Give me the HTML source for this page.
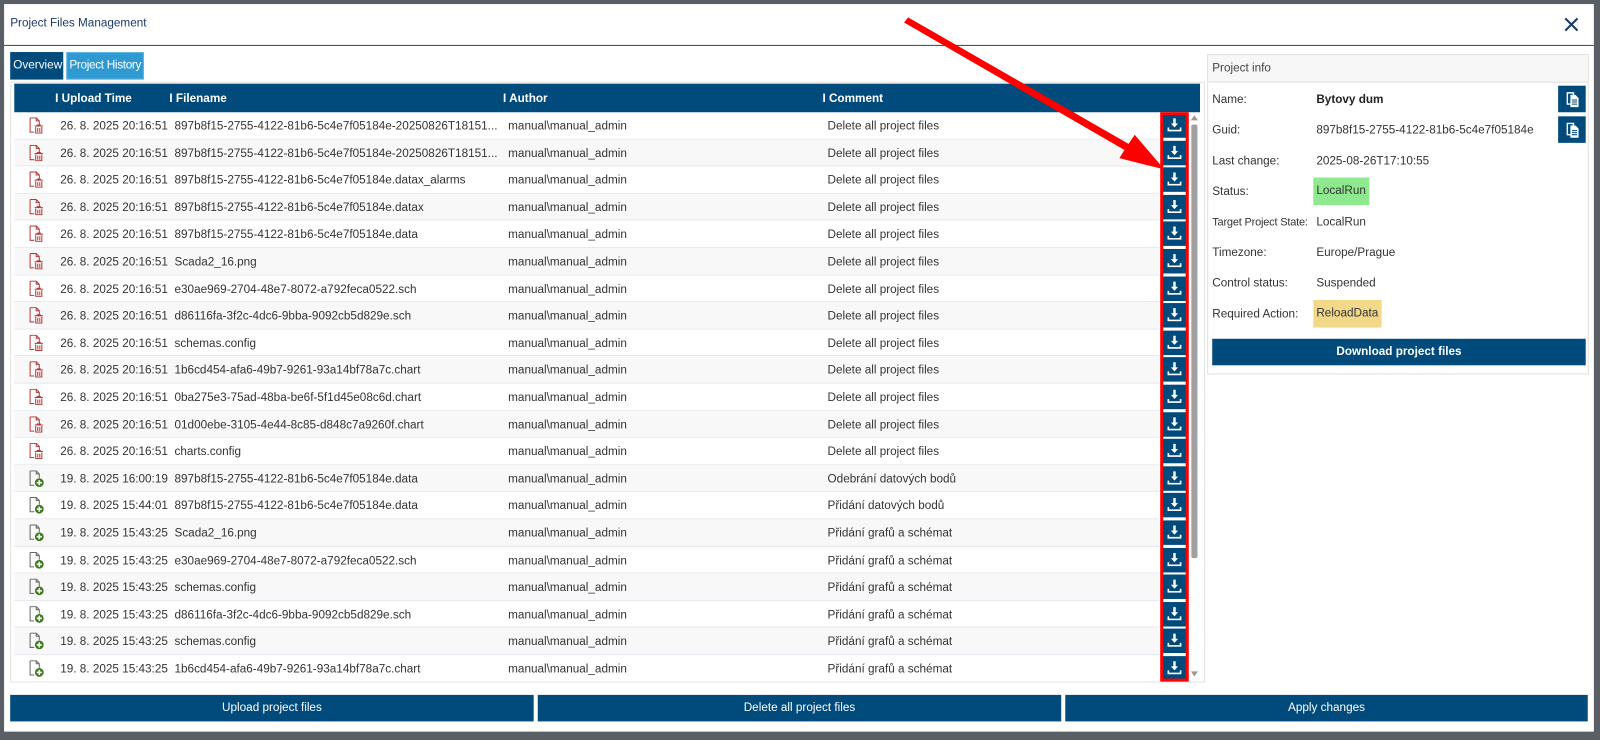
<!DOCTYPE html>
<html><head><meta charset="utf-8"><style>
*{box-sizing:border-box;margin:0;padding:0}
body{width:1600px;height:740px;background:#5a5f66;font-family:"Liberation Sans",sans-serif;font-size:11.5px;color:#333;position:relative;overflow:hidden}
.wrap{position:absolute;left:0;top:0;width:1568px;height:725px;transform:scale(1.0204);transform-origin:0 0}
.dlg{position:absolute;left:4px;top:4px;width:1558px;height:713px;background:#fff}
.abs{position:absolute}
.title{left:6px;top:13px;font-size:11.5px;color:#1d3b66}
.hline{left:0;top:40px;width:1558px;height:1px;background:#2c4a6e}
.tab{top:47px;height:27px;line-height:27px;font-size:11.5px;color:#fff;padding:0 3px;white-space:nowrap}
.tbl{left:6px;top:76px;width:1171px;height:589px;border:1px solid #e2e2e2}
.th{left:10px;top:78px;width:1162px;height:28px;background:#004a7c;color:#fff;font-weight:bold;font-size:11.5px;line-height:30px}
.th span{position:absolute}
.row{position:absolute;left:10px;width:1122px;height:26.6px;line-height:28px;border-bottom:1px solid #e6e9ef;font-size:11.5px;color:#333}
.row.a{background:#f8f8f8}
.row span{position:absolute;white-space:nowrap}
.row svg{position:absolute;left:14px;top:5px}
.dl{position:absolute;left:1135px;width:24px;height:24px;background:#004a7c}
.dl svg{position:absolute;left:5px;top:4px}
.red{left:1133px;top:106px;width:28px;height:558px;border:3px solid #f00}
.sb{left:1162px;top:106px;width:9px;height:556px}
.btn{background:#004a7c;color:#fff;text-align:center;font-size:11.5px;height:26px;line-height:27px}
.pi{left:1179px;top:49px;width:374px;height:314px;border:1px solid #e0e0e0}
.pih{left:0;top:0;width:372px;height:27px;background:#f7f7f7;border-bottom:1px solid #e0e0e0;line-height:27px;padding-left:4px;color:#444}
.lbl{left:4px;color:#333;white-space:nowrap}
.val{left:106px;color:#333;white-space:nowrap}
</style></head><body>
<svg width="0" height="0" style="position:absolute">
<defs>
<g id="del"><path d="M1.5 0.5h6l3 3v5" fill="none" stroke="#b23a3a" stroke-width="1"/><path d="M1.5 0.5v14h4" fill="none" stroke="#b23a3a"/><path d="M7.5 0.5v3h3" fill="none" stroke="#b23a3a"/><path d="M6 8.5h8M8.5 8.5v-1h3v1M7 9.5v6h6v-6M9 10.5v4M11 10.5v4" fill="none" stroke="#b23a3a"/></g>
<g id="add"><path d="M1.5 0.5h6l3 3v4" fill="none" stroke="#666"/><path d="M1.5 0.5v14h4" fill="none" stroke="#666"/><path d="M7.5 0.5v3h3" fill="none" stroke="#666"/><circle cx="10.5" cy="12" r="4.3" fill="#3d7a1f"/><path d="M8 12h5M10.5 9.5v5" stroke="#fff" stroke-width="1.6"/></g>
<g id="dn"><path d="M7 1v6" stroke="#fff" stroke-width="2.4"/><path d="M3.5 6h7l-3.5 4z" fill="#fff"/><path d="M1 10v3h12v-3" fill="none" stroke="#fff" stroke-width="1.6"/></g>
</defs></svg>
<div class="wrap">
<div class="dlg">
<div class="abs title">Project Files Management</div>
<svg class="abs" style="left:1528px;top:12px" width="16" height="16"><path d="M2 2L14 14M14 2L2 14" stroke="#1d3b66" stroke-width="2"/></svg>
<div class="abs hline"></div>
<div class="abs tab" style="left:6px;background:#004a7c;width:52px">Overview</div>
<div class="abs tab" style="left:61px;background:#2f9ad1;width:76px;border:1px solid #5bb4e3;line-height:25px;padding:0 2px;letter-spacing:-0.3px">Project History</div>
<div class="abs tbl"></div>
<div class="abs th"><span style="left:40px">I Upload Time</span><span style="left:152px">I Filename</span><span style="left:479px">I Author</span><span style="left:792px">I Comment</span></div>

<div class="row" style="top:106px"><svg width="16" height="16"><use href="#del"/></svg><span style="left:45px">26. 8. 2025 20:16:51</span><span style="left:157px">897b8f15-2755-4122-81b6-5c4e7f05184e-20250826T18151...</span><span style="left:484px">manual\manual_admin</span><span style="left:797px">Delete all project files</span></div>
<div class="row a" style="top:132.6px"><svg width="16" height="16"><use href="#del"/></svg><span style="left:45px">26. 8. 2025 20:16:51</span><span style="left:157px">897b8f15-2755-4122-81b6-5c4e7f05184e-20250826T18151...</span><span style="left:484px">manual\manual_admin</span><span style="left:797px">Delete all project files</span></div>
<div class="row" style="top:159.2px"><svg width="16" height="16"><use href="#del"/></svg><span style="left:45px">26. 8. 2025 20:16:51</span><span style="left:157px">897b8f15-2755-4122-81b6-5c4e7f05184e.datax_alarms</span><span style="left:484px">manual\manual_admin</span><span style="left:797px">Delete all project files</span></div>
<div class="row a" style="top:185.8px"><svg width="16" height="16"><use href="#del"/></svg><span style="left:45px">26. 8. 2025 20:16:51</span><span style="left:157px">897b8f15-2755-4122-81b6-5c4e7f05184e.datax</span><span style="left:484px">manual\manual_admin</span><span style="left:797px">Delete all project files</span></div>
<div class="row" style="top:212.4px"><svg width="16" height="16"><use href="#del"/></svg><span style="left:45px">26. 8. 2025 20:16:51</span><span style="left:157px">897b8f15-2755-4122-81b6-5c4e7f05184e.data</span><span style="left:484px">manual\manual_admin</span><span style="left:797px">Delete all project files</span></div>
<div class="row a" style="top:239px"><svg width="16" height="16"><use href="#del"/></svg><span style="left:45px">26. 8. 2025 20:16:51</span><span style="left:157px">Scada2_16.png</span><span style="left:484px">manual\manual_admin</span><span style="left:797px">Delete all project files</span></div>
<div class="row" style="top:265.6px"><svg width="16" height="16"><use href="#del"/></svg><span style="left:45px">26. 8. 2025 20:16:51</span><span style="left:157px">e30ae969-2704-48e7-8072-a792feca0522.sch</span><span style="left:484px">manual\manual_admin</span><span style="left:797px">Delete all project files</span></div>
<div class="row a" style="top:292.2px"><svg width="16" height="16"><use href="#del"/></svg><span style="left:45px">26. 8. 2025 20:16:51</span><span style="left:157px">d86116fa-3f2c-4dc6-9bba-9092cb5d829e.sch</span><span style="left:484px">manual\manual_admin</span><span style="left:797px">Delete all project files</span></div>
<div class="row" style="top:318.8px"><svg width="16" height="16"><use href="#del"/></svg><span style="left:45px">26. 8. 2025 20:16:51</span><span style="left:157px">schemas.config</span><span style="left:484px">manual\manual_admin</span><span style="left:797px">Delete all project files</span></div>
<div class="row a" style="top:345.4px"><svg width="16" height="16"><use href="#del"/></svg><span style="left:45px">26. 8. 2025 20:16:51</span><span style="left:157px">1b6cd454-afa6-49b7-9261-93a14bf78a7c.chart</span><span style="left:484px">manual\manual_admin</span><span style="left:797px">Delete all project files</span></div>
<div class="row" style="top:372px"><svg width="16" height="16"><use href="#del"/></svg><span style="left:45px">26. 8. 2025 20:16:51</span><span style="left:157px">0ba275e3-75ad-48ba-be6f-5f1d45e08c6d.chart</span><span style="left:484px">manual\manual_admin</span><span style="left:797px">Delete all project files</span></div>
<div class="row a" style="top:398.6px"><svg width="16" height="16"><use href="#del"/></svg><span style="left:45px">26. 8. 2025 20:16:51</span><span style="left:157px">01d00ebe-3105-4e44-8c85-d848c7a9260f.chart</span><span style="left:484px">manual\manual_admin</span><span style="left:797px">Delete all project files</span></div>
<div class="row" style="top:425.2px"><svg width="16" height="16"><use href="#del"/></svg><span style="left:45px">26. 8. 2025 20:16:51</span><span style="left:157px">charts.config</span><span style="left:484px">manual\manual_admin</span><span style="left:797px">Delete all project files</span></div>
<div class="row a" style="top:451.8px"><svg width="16" height="17"><use href="#add"/></svg><span style="left:45px">19. 8. 2025 16:00:19</span><span style="left:157px">897b8f15-2755-4122-81b6-5c4e7f05184e.data</span><span style="left:484px">manual\manual_admin</span><span style="left:797px">Odebrání datových bodů</span></div>
<div class="row" style="top:478.4px"><svg width="16" height="17"><use href="#add"/></svg><span style="left:45px">19. 8. 2025 15:44:01</span><span style="left:157px">897b8f15-2755-4122-81b6-5c4e7f05184e.data</span><span style="left:484px">manual\manual_admin</span><span style="left:797px">Přidání datových bodů</span></div>
<div class="row a" style="top:505px"><svg width="16" height="17"><use href="#add"/></svg><span style="left:45px">19. 8. 2025 15:43:25</span><span style="left:157px">Scada2_16.png</span><span style="left:484px">manual\manual_admin</span><span style="left:797px">Přidání grafů a schémat</span></div>
<div class="row" style="top:531.6px"><svg width="16" height="17"><use href="#add"/></svg><span style="left:45px">19. 8. 2025 15:43:25</span><span style="left:157px">e30ae969-2704-48e7-8072-a792feca0522.sch</span><span style="left:484px">manual\manual_admin</span><span style="left:797px">Přidání grafů a schémat</span></div>
<div class="row a" style="top:558.2px"><svg width="16" height="17"><use href="#add"/></svg><span style="left:45px">19. 8. 2025 15:43:25</span><span style="left:157px">schemas.config</span><span style="left:484px">manual\manual_admin</span><span style="left:797px">Přidání grafů a schémat</span></div>
<div class="row" style="top:584.8px"><svg width="16" height="17"><use href="#add"/></svg><span style="left:45px">19. 8. 2025 15:43:25</span><span style="left:157px">d86116fa-3f2c-4dc6-9bba-9092cb5d829e.sch</span><span style="left:484px">manual\manual_admin</span><span style="left:797px">Přidání grafů a schémat</span></div>
<div class="row a" style="top:611.4px"><svg width="16" height="17"><use href="#add"/></svg><span style="left:45px">19. 8. 2025 15:43:25</span><span style="left:157px">schemas.config</span><span style="left:484px">manual\manual_admin</span><span style="left:797px">Přidání grafů a schémat</span></div>
<div class="row" style="top:638px"><svg width="16" height="17"><use href="#add"/></svg><span style="left:45px">19. 8. 2025 15:43:25</span><span style="left:157px">1b6cd454-afa6-49b7-9261-93a14bf78a7c.chart</span><span style="left:484px">manual\manual_admin</span><span style="left:797px">Přidání grafů a schémat</span></div>

<div class="dl" style="top:107px"><svg width="14" height="14"><use href="#dn"/></svg></div>
<div class="dl" style="top:133.6px"><svg width="14" height="14"><use href="#dn"/></svg></div>
<div class="dl" style="top:160.2px"><svg width="14" height="14"><use href="#dn"/></svg></div>
<div class="dl" style="top:186.8px"><svg width="14" height="14"><use href="#dn"/></svg></div>
<div class="dl" style="top:213.4px"><svg width="14" height="14"><use href="#dn"/></svg></div>
<div class="dl" style="top:240px"><svg width="14" height="14"><use href="#dn"/></svg></div>
<div class="dl" style="top:266.6px"><svg width="14" height="14"><use href="#dn"/></svg></div>
<div class="dl" style="top:293.2px"><svg width="14" height="14"><use href="#dn"/></svg></div>
<div class="dl" style="top:319.8px"><svg width="14" height="14"><use href="#dn"/></svg></div>
<div class="dl" style="top:346.4px"><svg width="14" height="14"><use href="#dn"/></svg></div>
<div class="dl" style="top:373px"><svg width="14" height="14"><use href="#dn"/></svg></div>
<div class="dl" style="top:399.6px"><svg width="14" height="14"><use href="#dn"/></svg></div>
<div class="dl" style="top:426.2px"><svg width="14" height="14"><use href="#dn"/></svg></div>
<div class="dl" style="top:452.8px"><svg width="14" height="14"><use href="#dn"/></svg></div>
<div class="dl" style="top:479.4px"><svg width="14" height="14"><use href="#dn"/></svg></div>
<div class="dl" style="top:506px"><svg width="14" height="14"><use href="#dn"/></svg></div>
<div class="dl" style="top:532.6px"><svg width="14" height="14"><use href="#dn"/></svg></div>
<div class="dl" style="top:559.2px"><svg width="14" height="14"><use href="#dn"/></svg></div>
<div class="dl" style="top:585.8px"><svg width="14" height="14"><use href="#dn"/></svg></div>
<div class="dl" style="top:612.4px"><svg width="14" height="14"><use href="#dn"/></svg></div>
<div class="dl" style="top:639px"><svg width="14" height="14"><use href="#dn"/></svg></div>
<div class="abs red"></div>
<svg class="abs sb" width="9" height="556"><path d="M1 8L4.5 3L8 8z" fill="#999"/><rect x="1.5" y="12" width="6" height="425" rx="2" fill="#a0a0a0"/><path d="M1 548L4.5 553L8 548z" fill="#999"/></svg>

<div class="abs pi">
<div class="abs pih">Project info</div>
<div class="abs lbl" style="top:38px">Name:</div><div class="abs val" style="top:38px;font-weight:bold;color:#222">Bytovy dum</div>
<div class="abs lbl" style="top:68px">Guid:</div><div class="abs val" style="top:68px">897b8f15-2755-4122-81b6-5c4e7f05184e</div>
<div class="abs lbl" style="top:98px">Last change:</div><div class="abs val" style="top:98px">2025-08-26T17:10:55</div>
<div class="abs lbl" style="top:128px">Status:</div><div class="abs val" style="top:120px;left:103px;background:#8fe98f;padding:0 3px;line-height:27px">LocalRun</div>
<div class="abs lbl" style="top:158px;font-size:10.8px;letter-spacing:-0.2px">Target Project State:</div><div class="abs val" style="top:158px">LocalRun</div>
<div class="abs lbl" style="top:188px">Timezone:</div><div class="abs val" style="top:188px">Europe/Prague</div>
<div class="abs lbl" style="top:218px">Control status:</div><div class="abs val" style="top:218px">Suspended</div>
<div class="abs lbl" style="top:248px">Required Action:</div><div class="abs val" style="top:240px;left:103px;background:#f2d98a;padding:0 3px;line-height:27px">ReloadData</div>
<div class="abs btn" style="left:4px;top:278px;width:366px;font-weight:bold">Download project files</div>
<div class="abs" style="left:343px;top:30px;width:27px;height:26px;background:#004a7c"><svg width="27" height="26"><path d="M9 7h6v11h-6z" fill="none" stroke="#fff" stroke-width="1.4"/><path d="M12 9h5l3 3v9h-8z" fill="#fff"/><path d="M13.5 14h5M13.5 16h5M13.5 18h5" stroke="#004a7c"/></svg></div>
<div class="abs" style="left:343px;top:60px;width:27px;height:26px;background:#004a7c"><svg width="27" height="26"><path d="M9 7h6v11h-6z" fill="none" stroke="#fff" stroke-width="1.4"/><path d="M12 9h5l3 3v9h-8z" fill="#fff"/><path d="M13.5 14h5M13.5 16h5M13.5 18h5" stroke="#004a7c"/></svg></div>
</div>

<div class="abs btn" style="left:6px;top:677px;width:513px">Upload project files</div>
<div class="abs btn" style="left:523px;top:677px;width:513px">Delete all project files</div>
<div class="abs btn" style="left:1040px;top:677px;width:512px">Apply changes</div>
</div>
<svg class="abs" style="left:0;top:0" width="1568" height="725"><path d="M886 22L890 17L1106 141L1112 132L1141 166L1097 155L1102 147Z" fill="#f00"/></svg>
</div>
</body></html>
